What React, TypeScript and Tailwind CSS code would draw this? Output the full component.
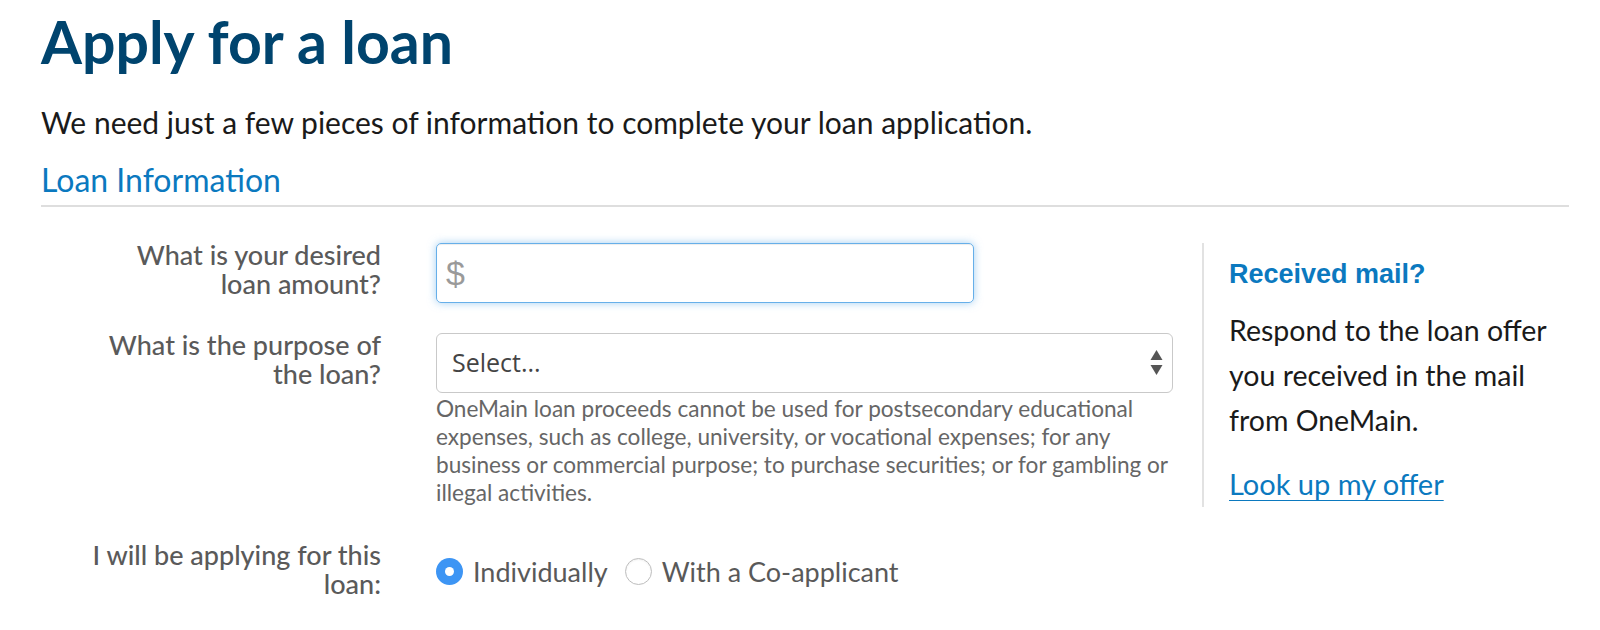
import { useState } from "react";

function Label({ children }: { children: React.ReactNode }) {
  return (
    <label className="w-[340px] shrink-0 -mt-[3px] text-right text-[27px] leading-[29px] font-medium text-[#5a5a5a]">
      {children}
    </label>
  );
}

function Radio({ checked, onClick, children }: { checked: boolean; onClick: () => void; children: React.ReactNode }) {
  return (
    <button type="button" onClick={onClick} className="flex items-center gap-[10px] text-left">
      {checked ? (
        <span className="flex h-[27px] w-[27px] items-center justify-center rounded-full bg-[#3d95f4]">
          <span className="h-[9px] w-[9px] rounded-full bg-white" />
        </span>
      ) : (
        <span className="h-[27px] w-[27px] rounded-full border border-[#bdbdbd] bg-white shadow-[inset_0_1px_2px_rgba(0,0,0,0.06)]" />
      )}
      <span className="text-[27px] leading-[28px] text-[#595959]">{children}</span>
    </button>
  );
}

export default function App() {
  const [applicant, setApplicant] = useState<"single" | "joint">("single");

  return (
    <div className="min-h-[630px] bg-white pl-[41px] pr-[31px] pt-[10px] font-['Lato',sans-serif]">
      <h1 className="text-[59px] leading-[64px] font-bold text-[#00446e]">Apply for a loan</h1>
      <p className="mt-[30px] text-[30px] leading-[36px] text-[#1a1a1a]">
        We need just a few pieces of information to complete your loan application.
      </p>
      <h2 className="mt-[20px] border-b-2 border-[#dedede] pb-[5px] text-[32px] leading-[40px] text-[#0b79bf]">
        Loan Information
      </h2>

      <div className="mt-[36px] flex">
        <div className="flex w-[1161px] flex-col gap-[30px] pr-[29px]">
          <div className="flex gap-[55px]">
            <Label>
              What is your desired
              <br />
              loan amount?
            </Label>
            <div className="flex h-[60px] w-[538px] items-center rounded-[5px] border border-[#66afe9] px-[9px] shadow-[0_0_8px_rgba(102,175,233,0.6),inset_0_1px_1px_rgba(0,0,0,0.075)]">
              <span className="font-['Liberation_Sans',sans-serif] text-[34px] text-[#9a9a9a]">$</span>
            </div>
          </div>

          <div className="flex gap-[55px]">
            <Label>
              What is the purpose of
              <br />
              the loan?
            </Label>
            <div className="flex-1">
              <div className="flex h-[60px] items-center justify-between rounded-[6px] border border-[#c9c9c9] pl-[15px] pr-[9px]">
                <span className="font-['Open_Sans',sans-serif] text-[25px] text-[#444]">Select...</span>
                <svg width="13" height="26" viewBox="0 0 13 26" className="fill-[#555]">
                  <path d="M6.5 0L12.5 10H0.5Z" />
                  <path d="M6.5 25L12.5 15H0.5Z" />
                </svg>
              </div>
              <p className="mt-[2px] text-[22.6px] leading-[28px] text-[#666]">
                OneMain loan proceeds cannot be used for postsecondary educational expenses, such as college,
                university, or vocational expenses; for any business or commercial purpose; to purchase securities;
                or for gambling or illegal activities.
              </p>
            </div>
          </div>
        </div>

        <aside className="flex-1 border-l-2 border-[#e2e2e2] pl-[25px] pt-[15px]">
          <h3 className="font-['Liberation_Sans',sans-serif] text-[27px] leading-[32px] font-bold text-[#0b79bf]">
            Received mail?
          </h3>
          <p className="mt-[18px] w-[330px] text-[28.5px] leading-[45px] text-[#1a1a1a]">
            Respond to the loan offer you received in the mail from OneMain.
          </p>
          <a href="#" className="mt-[18px] block text-[29px] leading-[45px] text-[#0b79bf] underline underline-offset-[5px] decoration-1">
            Look up my offer
          </a>
        </aside>
      </div>

      <div className="mt-[36px] flex gap-[55px]">
        <Label>
          I will be applying for this
          <br />
          loan:
        </Label>
        <div className="mt-[2px] flex items-center gap-[17px]">
          <Radio checked={applicant === "single"} onClick={() => setApplicant("single")}>
            Individually
          </Radio>
          <Radio checked={applicant === "joint"} onClick={() => setApplicant("joint")}>
            With a Co-applicant
          </Radio>
        </div>
      </div>
    </div>
  );
}
